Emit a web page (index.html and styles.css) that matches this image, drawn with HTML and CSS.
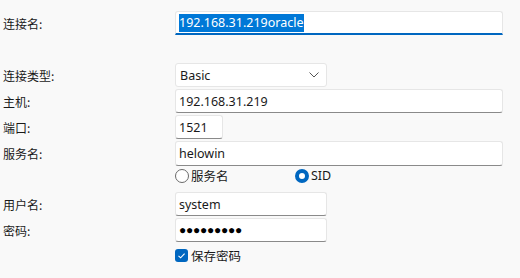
FILE: index.html
```html
<!DOCTYPE html>
<html lang="zh">
<head>
<meta charset="utf-8">
<title>连接</title>
<link rel="stylesheet" href="styles.css">
</head>
<body>
<div class="form">
  <div class="row">
    <label class="lbl">连接名:</label>
    <div class="field wide focused"><span class="sel">192.168.31.219oracle</span></div>
  </div>
  <div class="row gap-big">
    <label class="lbl">连接类型:</label>
    <div class="field select"><span>Basic</span>
      <svg class="chev" width="10" height="6" viewBox="0 0 10 6"><path d="M0.5 0.5 L5 5 L9.5 0.5" fill="none" stroke="#555" stroke-width="1"/></svg>
    </div>
  </div>
  <div class="row">
    <label class="lbl">主机:</label>
    <div class="field wide">192.168.31.219</div>
  </div>
  <div class="row">
    <label class="lbl">端口:</label>
    <div class="field port">1521</div>
  </div>
  <div class="row">
    <label class="lbl">服务名:</label>
    <div class="field wide tall">helowin</div>
  </div>
  <div class="row radios">
    <span class="lbl"></span>
    <span class="opt opt1"><span class="radio"></span>服务名</span>
    <span class="opt"><span class="radio on"></span>SID</span>
  </div>
  <div class="row gap-user">
    <label class="lbl">用户名:</label>
    <div class="field mid">system</div>
  </div>
  <div class="row">
    <label class="lbl">密码:</label>
    <div class="field mid dots">●●●●●●●●●</div>
  </div>
  <div class="row check-row">
    <span class="lbl"></span>
    <span class="opt"><span class="check"><svg width="13" height="13" viewBox="0 0 13 13"><path d="M3.5 6.8 L5.6 8.8 L9.6 4.6" fill="none" stroke="#fff" stroke-width="1.1"/></svg></span>保存密码</span>
  </div>
</div>
</body>
</html>
```

FILE: styles.css
```css
html, body {
  margin: 0;
  padding: 0;
  background: #f9f9f9;
}
body {
  font-family: "Noto Sans", "Noto Sans CJK SC", sans-serif;
  font-size: 12px;
  color: #1a1a1a;
  width: 520px;
  height: 278px;
  overflow: hidden;
}
.form {
  display: flex;
  flex-direction: column;
  padding-top: 11px;
  row-gap: 2px;
}
.row {
  display: flex;
  align-items: center;
  height: 24px;
}
.gap-big { margin-top: 26px; }
.gap-user { margin-top: 7px; }
.lbl {
  width: 172px;
  padding-left: 3px;
  flex: none;
  font-family: "Noto Sans CJK SC", sans-serif;
  font-size: 12px;
  color: #1a1a1a;
}
.field {
  box-sizing: border-box;
  height: 24px;
  background: #fff;
  border: 1px solid #e6e6e6;
  border-bottom: 1px solid #8a8a8a;
  border-radius: 3px;
  padding-left: 3px;
  display: flex;
  align-items: center;
  font-size: 12.5px;
  color: #1a1a1a;
}
.wide { width: 328px; }
.tall { height: 25px; }
.mid { width: 152px; }
.port { width: 48px; }
.focused {
  border-bottom: 2px solid #0067c0;
  border-radius: 3px 3px 0 0;
}
.sel {
  background: #0078d7;
  color: #fff;
  line-height: 18px;
  padding-right: 1px;
}
.select {
  width: 152px;
  justify-content: space-between;
  padding-left: 4px;
  padding-right: 7px;
  border-bottom-color: #e6e6e6;
}
.chev { display: block; }
.radios { height: 15px; margin-top: 1px; }
.opt {
  display: flex;
  align-items: center;
  font-family: "Noto Sans", "Noto Sans CJK SC", sans-serif;
  font-size: 12.5px;
  color: #1a1a1a;
}
.opt1 { width: 120px; }
.radio {
  box-sizing: border-box;
  width: 14px;
  height: 14px;
  border-radius: 50%;
  border: 1px solid #6a6a6a;
  background: #fff;
  margin-right: 2px;
}
.radio.on {
  border: 4px solid #0067c0;
  background: #fff;
}
.check-row { height: 15px; margin-top: 4px; }
.check {
  width: 13px;
  height: 13px;
  border-radius: 3px;
  background: #0067c0;
  margin-right: 3px;
  display: block;
}
.check svg { display: block; }
.dots {
  font-family: "Liberation Sans", sans-serif;
  font-size: 12px;
  letter-spacing: -0.25px;
  color: #000;
}
```
